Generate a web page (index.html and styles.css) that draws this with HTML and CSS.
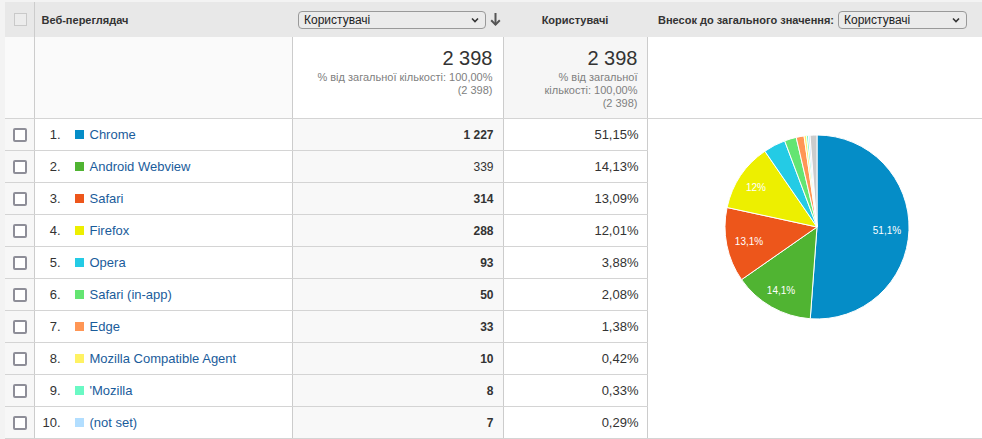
FILE: index.html
```html
<!DOCTYPE html>
<html lang="uk">
<head>
<meta charset="utf-8">
<title>Веб-переглядач</title>
<link rel="stylesheet" href="styles.css">
</head>
<body>
<div class="wrap">
<table class="report">
  <colgroup>
    <col class="c-check"><col class="c-dim"><col class="c-m1"><col class="c-m2"><col class="c-pie">
  </colgroup>
  <thead>
    <tr class="head">
      <th class="check"><span class="hbox"></span></th>
      <th class="dim-h">Веб-переглядач</th>
      <th class="m1-h">
        <div class="m1-head">
          <div class="select wide"><span>Користувачі</span><svg class="chev" width="8" height="6" viewBox="0 0 8 6"><polyline points="1,1.5 4,4.5 7,1.5" fill="none" stroke="#333" stroke-width="1.6"/></svg></div>
          <svg class="sort" width="11" height="13" viewBox="0 0 11 13"><line x1="5.5" y1="0" x2="5.5" y2="12" stroke="#555" stroke-width="2"/><polyline points="1.2,7.2 5.5,11.6 9.8,7.2" fill="none" stroke="#555" stroke-width="2"/></svg>
        </div>
      </th>
      <th class="m2-h">Користувачі</th>
      <th class="pie-h">
        <div class="pie-head">
          <span class="pie-label">Внесок до загального значення:</span>
          <div class="select narrow"><span>Користувачі</span><svg class="chev" width="8" height="6" viewBox="0 0 8 6"><polyline points="1,1.5 4,4.5 7,1.5" fill="none" stroke="#333" stroke-width="1.6"/></svg></div>
        </div>
      </th>
    </tr>
  </thead>
  <tbody>
    <tr class="totals">
      <td class="check"></td>
      <td class="dim"></td>
      <td class="m1 tot-m1"><div class="big">2 398</div><div class="sub">% від загальної кількості: 100,00%<br>(2 398)</div></td>
      <td class="m2 tot-m2"><div class="big">2 398</div><div class="sub">% від загальної<br>кількості: 100,00%<br>(2 398)</div></td>
      <td class="pie-top"></td>
    </tr>
    <tr>
      <td class="check"><span class="box"></span></td>
      <td class="dim"><div class="name"><span class="rank">1.</span><span class="sw sw1"></span><a class="link">Chrome</a></div></td>
      <td class="m1 val">1 227</td>
      <td class="m2">51,15%</td>
      <td class="pie-cell" rowspan="10">
        <svg class="pie" width="335" height="214" viewBox="0 0 335 214">
          <g transform="translate(169 108)" stroke="#fff" stroke-width="1" stroke-linejoin="round">
            <path fill="#058dc7" d="M0 0 L0 -92 A92 92 0 1 1 -6.74 91.75 Z"/>
            <path fill="#50b432" d="M0 0 L-6.74 91.75 A92 92 0 0 1 -75.45 52.64 Z"/>
            <path fill="#ed561b" d="M0 0 L-75.45 52.64 A92 92 0 0 1 -89.91 -19.50 Z"/>
            <path fill="#edef00" d="M0 0 L-89.91 -19.50 A92 92 0 0 1 -52.15 -75.79 Z"/>
            <path fill="#24cbe5" d="M0 0 L-52.15 -75.79 A92 92 0 0 1 -32.32 -86.14 Z"/>
            <path fill="#64e572" d="M0 0 L-32.32 -86.14 A92 92 0 0 1 -20.79 -89.62 Z"/>
            <path fill="#ff9655" d="M0 0 L-20.79 -89.62 A92 92 0 0 1 -12.98 -91.08 Z"/>
            <path fill="#fff263" d="M0 0 L-12.98 -91.08 A92 92 0 0 1 -10.59 -91.39 Z"/>
            <path fill="#6af9c4" d="M0 0 L-10.59 -91.39 A92 92 0 0 1 -8.67 -91.59 Z"/>
            <path fill="#b2deff" d="M0 0 L-8.67 -91.59 A92 92 0 0 1 -6.99 -91.73 Z"/>
            <path fill="#cccccc" d="M0 0 L-6.99 -91.73 A92 92 0 0 1 0 -92 Z"/>
          </g>
          <g transform="translate(169 108)" class="plabels">
            <text x="70" y="3">51,1%</text>
            <text x="-36" y="63">14,1%</text>
            <text x="-68" y="14">13,1%</text>
            <text x="-61" y="-40">12%</text>
          </g>
        </svg>
      </td>
    </tr>
    <tr>
      <td class="check"><span class="box"></span></td>
      <td class="dim"><div class="name"><span class="rank">2.</span><span class="sw sw2"></span><a class="link">Android Webview</a></div></td>
      <td class="m1 val light">339</td>
      <td class="m2">14,13%</td>
    </tr>
    <tr>
      <td class="check"><span class="box"></span></td>
      <td class="dim"><div class="name"><span class="rank">3.</span><span class="sw sw3"></span><a class="link">Safari</a></div></td>
      <td class="m1 val">314</td>
      <td class="m2">13,09%</td>
    </tr>
    <tr>
      <td class="check"><span class="box"></span></td>
      <td class="dim"><div class="name"><span class="rank">4.</span><span class="sw sw4"></span><a class="link">Firefox</a></div></td>
      <td class="m1 val">288</td>
      <td class="m2">12,01%</td>
    </tr>
    <tr>
      <td class="check"><span class="box"></span></td>
      <td class="dim"><div class="name"><span class="rank">5.</span><span class="sw sw5"></span><a class="link">Opera</a></div></td>
      <td class="m1 val">93</td>
      <td class="m2">3,88%</td>
    </tr>
    <tr>
      <td class="check"><span class="box"></span></td>
      <td class="dim"><div class="name"><span class="rank">6.</span><span class="sw sw6"></span><a class="link">Safari (in-app)</a></div></td>
      <td class="m1 val">50</td>
      <td class="m2">2,08%</td>
    </tr>
    <tr>
      <td class="check"><span class="box"></span></td>
      <td class="dim"><div class="name"><span class="rank">7.</span><span class="sw sw7"></span><a class="link">Edge</a></div></td>
      <td class="m1 val">33</td>
      <td class="m2">1,38%</td>
    </tr>
    <tr>
      <td class="check"><span class="box"></span></td>
      <td class="dim"><div class="name"><span class="rank">8.</span><span class="sw sw8"></span><a class="link">Mozilla Compatible Agent</a></div></td>
      <td class="m1 val">10</td>
      <td class="m2">0,42%</td>
    </tr>
    <tr>
      <td class="check"><span class="box"></span></td>
      <td class="dim"><div class="name"><span class="rank">9.</span><span class="sw sw9"></span><a class="link">'Mozilla</a></div></td>
      <td class="m1 val">8</td>
      <td class="m2">0,33%</td>
    </tr>
    <tr>
      <td class="check"><span class="box"></span></td>
      <td class="dim"><div class="name"><span class="rank">10.</span><span class="sw sw10"></span><a class="link">(not set)</a></div></td>
      <td class="m1 val">7</td>
      <td class="m2">0,29%</td>
    </tr>
  </tbody>
</table>
</div>
</body>
</html>
```
FILE: styles.css
```css
html, body {
  margin: 0;
  padding: 0;
}
body {
  background: #f3f3f3;
  font-family: "Liberation Sans", Arial, sans-serif;
  color: #333;
}
.wrap {
  padding: 2px 0 0 5px;
}
.report {
  border-collapse: collapse;
  table-layout: fixed;
  width: 977px;
}
.c-check { width: 29px; }
.c-dim { width: 258px; }
.c-m1 { width: 211px; }
.c-m2 { width: 144px; }
.c-pie { width: 335px; }

.head th {
  background: #e8e8e8;
  height: 35px;
  padding: 0;
  font-size: 11px;
  font-weight: bold;
  text-align: left;
  vertical-align: middle;
  color: #333;
  white-space: nowrap;
}
.hbox {
  display: block;
  width: 11px;
  height: 11px;
  margin: 0 auto;
  border: 1px solid #c9c9c9;
  background: #ececec;
  position: relative;
  left: 1px;
}
.dim-h { padding-left: 7px !important; }
.m1-head {
  display: flex;
  align-items: center;
  padding-left: 6px;
}
.select {
  box-sizing: border-box;
  flex-shrink: 0;
  height: 18px;
  border: 1px solid #999;
  border-radius: 4px;
  background: #ebebeb;
  font-size: 12px;
  font-weight: normal;
  color: #222;
  display: flex;
  align-items: center;
  justify-content: space-between;
  padding: 0 6px 0 5px;
}
.select.wide { width: 188px; }
.select.narrow { width: 129px; }
.sort { margin-left: 4px; }
.m2-h { text-align: center !important; }
.pie-head {
  display: flex;
  align-items: center;
  gap: 4px;
  padding-left: 11px;
}
.pie-label {
  white-space: nowrap;
  flex-shrink: 0;
}

td {
  padding: 0;
  font-size: 13px;
  vertical-align: middle;
}
.totals td {
  vertical-align: top;
  border-bottom: 1px solid #d4d4d4;
}
.totals .check, .totals .dim { background: #fafafa; }
.check {
  background: #f7f7f7;
  border-right: 1px solid #ccc;
}
.dim {
  background: #fff;
  border-right: 1px solid #ccc;
}
.m1 {
  background: #f8f8f8;
  border-right: 1px solid #ccc;
  text-align: right;
  padding-right: 9px;
}
.m2 {
  background: #fff;
  border-right: 1px solid #ccc;
  text-align: right;
  padding-right: 8px;
}
.tot-m1 { background: #fff; padding-right: 10px; }
.tot-m2 { background: #f6f6f6; padding-right: 9px; }
.pie-top { background: #fff; }
tbody tr td {
  height: 31px;
  border-bottom: 1px solid #d4d4d4;
}
tbody tr.totals td { height: 81px; }
.big {
  font-size: 20px;
  line-height: 24px;
  margin-top: 9px;
  color: #333;
}
.sub {
  font-size: 11px;
  line-height: 13px;
  color: #808080;
  white-space: nowrap;
  margin-top: 1px;
}
.box {
  display: block;
  box-sizing: border-box;
  width: 14px;
  height: 14px;
  margin: 0 auto;
  border: 2px solid #8e8e98;
  border-radius: 2px;
  background: #fff;
  position: relative;
  left: 1px;
}
.name {
  display: flex;
  align-items: center;
  white-space: nowrap;
}
.rank {
  width: 26px;
  text-align: right;
  color: #333;
}
.sw {
  width: 9px;
  height: 9px;
  margin-left: 14px;
  margin-right: 6px;
}
.sw1 { background: #058dc7; }
.sw2 { background: #50b432; }
.sw3 { background: #ed561b; }
.sw4 { background: #edef00; }
.sw5 { background: #24cbe5; }
.sw6 { background: #64e572; }
.sw7 { background: #ff9655; }
.sw8 { background: #fff263; }
.sw9 { background: #6af9c4; }
.sw10 { background: #b2deff; }
.link {
  color: #1a5c9b;
  text-decoration: none;
}
.val {
  font-weight: bold;
  font-size: 12px;
}
.val.light { font-weight: normal; }
.pie-cell {
  background: #fff;
  vertical-align: top;
  padding: 0;
}
.pie { display: block; }
.plabels text {
  fill: #fff;
  font-family: "Liberation Sans", Arial, sans-serif;
  font-size: 10px;
  text-anchor: middle;
  dominant-baseline: central;
}
```
